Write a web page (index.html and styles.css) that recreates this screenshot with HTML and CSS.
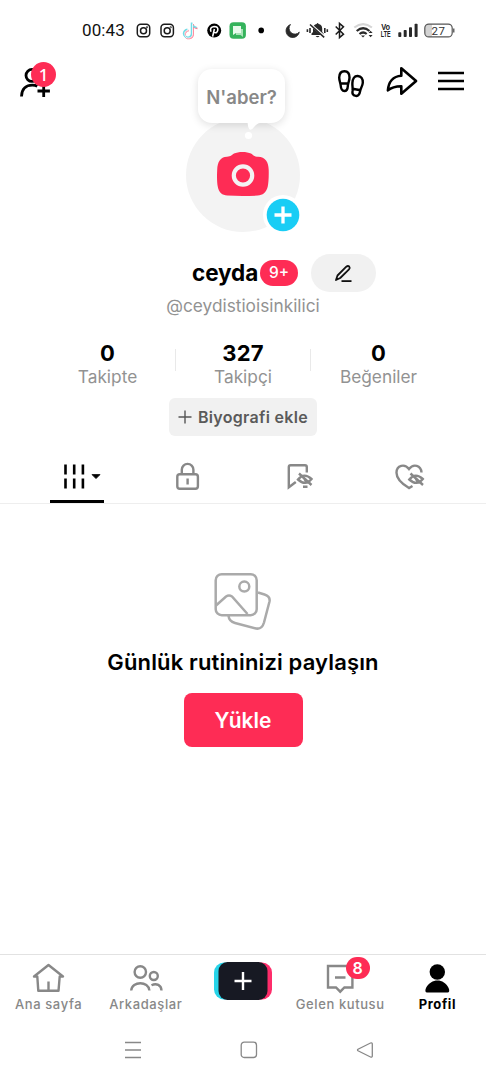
FILE: index.html
```html
<!DOCTYPE html>
<html lang="tr">
<head>
<meta charset="utf-8">
<title>Profil</title>
<link rel="stylesheet" href="styles.css">
</head>
<body>
<div class="phone">
  <div class="status">
    <span class="clock">00:43</span>
    <svg class="ink" width="24" height="24" viewBox="132 18 24 24"><rect x="137.3" y="24.3" width="12.4" height="12.4" rx="3.4"/><circle cx="143.5" cy="30.7" r="3"/><circle cx="147" cy="27.3" r=".3"/></svg>
    <svg class="ink" width="23" height="24" viewBox="156 18 23 24"><rect x="161" y="24.3" width="12.4" height="12.4" rx="3.4"/><circle cx="167.2" cy="30.7" r="3"/><circle cx="170.7" cy="27.3" r=".3"/></svg>
    <svg width="24" height="24" viewBox="179 18 24 24" fill="none" stroke-width="1.7"><path stroke="#ff7b91" d="M193 24v10a4 4 0 1 1-4-3.5M193 25q1 3 4.5 3.5"/><path stroke="#72dce6" d="M191.6 22.5v10.5a4 4 0 1 1-4.2-3.6M191.6 24q1 3 5 3.5"/><path stroke="#fff" stroke-width=".8" d="M192.5 24v10a3.8 3.8 0 1 1-4-3.5"/></svg>
    <svg width="23" height="24" viewBox="203 18 23 24"><circle cx="214.2" cy="30.6" r="7"/><path d="M211 31.7q-1.8-4.7 3.1-5.2 4.2 0 3.7 3.6-.8 3.7-3.8 2.3M214.4 29l-1.8 7.6" fill="none" stroke="#fff" stroke-width="1.6"/></svg>
    <svg width="24" height="24" viewBox="226 18 24 24"><rect x="229.5" y="22.3" width="16.4" height="16.4" rx="4" fill="#35b35c"/><path d="M236 29h7v8l-2.5-2H236z" fill="#a9e4b8"/><path d="M233 26h8v7h-5l-3 2z" fill="#e8faec"/></svg>
    <svg width="30" height="24" viewBox="250 18 30 24"><circle cx="261.2" cy="30.4" r="2.8"/></svg>
    <svg class="dark" width="24" height="24" viewBox="280 18 24 24"><path d="M290.500 24.500a5.500 5.500 0 0 0 8.800 7.600A6.700 6.700 0 1 1 290.500 24.500z" stroke="#292929" stroke-width=".8"/></svg>
    <svg class="dark" width="28" height="24" viewBox="304 18 28 24"><path d="M311.500 35v-1.500l1.500-1.500v-3.500q.2-3.700 3.600-4.500 1-1.800 2 0 3.500.8 3.600 4.500V32l1.400 1.500V35zM315.600 36h3.900q-1.800 2.700-3.900 0z"/><path d="M310.500 24.300l14.400 12.500" stroke="#fff" stroke-width="2.400"/><path d="M310 24.500l14.200 12.900M307.400 29.300v2.600M310 28v5M324.800 28v5M327.300 29.300v2.600" fill="none" stroke="#292929" stroke-width="1.600"/></svg>
    <svg class="ink" width="18" height="24" viewBox="332 18 18 24"><path d="M335.700 26.500l7.800 7.600-4 3.500V23.400l4 3.500-7.800 7.600"/></svg>
    <svg width="27" height="24" viewBox="350 18 27 24" fill="none" stroke="#292929" stroke-width="2.200"><path d="M354.300 27.500q8.800-6.800 17.600 0" stroke="#d5d5d5"/><path d="M356.700 31q6.400-5.500 12.800 0M359.500 34q3.600-3 7.200 0"/><path d="M361 35.500h4l-2 2zM368.600 33l2-2.200 2 2.200zM368.600 35l2 2.200 2-2.200z" fill="#292929" stroke="none"/></svg>
    <svg width="19" height="24" viewBox="377 18 19 24" class="volte"><text x="381.200" y="29.600" textLength="9" lengthAdjust="spacingAndGlyphs">Vo</text><text x="380.800" y="37" textLength="9.800" lengthAdjust="spacingAndGlyphs">LTE</text></svg>
    <svg class="dark" width="25" height="24" viewBox="396 18 25 24"><rect x="398.300" y="32.300" width="3" height="4.700" rx=".8"/><rect x="403.700" y="30" width="3" height="7" rx=".8"/><rect x="409" y="27.300" width="3" height="9.700" rx=".8"/><rect x="414.600" y="23.800" width="3" height="13.200" rx=".8"/></svg>
    <svg width="37" height="24" viewBox="421 18 37 24"><path d="M429 24.300h3v12.400h-3a4 4 0 0 1-4-4v-4.400a4 4 0 0 1 4-4z" fill="#d3d3d3"/><rect x="424.800" y="24.100" width="27.400" height="12.800" rx="4" fill="none" stroke="#555" stroke-width="1.200"/><path d="M453.700 28.500v4" stroke="#666" stroke-width="1.600"/><text x="438.500" y="34.700" text-anchor="middle" class="battery">27</text></svg>
  </div>

  <header class="top">
    <div class="friend">
      <svg width="34" height="36" viewBox="18 63 34 36" fill="none" stroke="#000" stroke-width="2.800"><circle cx="32" cy="75.400" r="6"/><path d="M21.500 96.500c.2-8 5-11.300 10.800-11.300q3 0 5 1.100M37.500 91h12.400M43.700 85v12"/></svg>
      <span class="count">1</span>
    </div>
    <div class="portrait">
      <div class="avatar">
        <svg width="52" height="46" viewBox="217 151 52 46"><path d="M227 156.800c4-.3 5-2 7-3.300 4-2.100 13-2.100 17 0 2 1.300 3 3 7 3.300 7.500.5 10.500 5 10.700 13 .2 7-.2 13.500-1 17-1.500 6-5 8.400-10 8.800q-15.200.9-30.400 0c-5-.4-8.500-2.800-9.500-8.800-.8-4-1-10-.6-17 .3-8 3-12.500 9.800-13z" fill="#fe2c55"/><circle cx="243" cy="175.500" r="9.200" fill="#fe2c55" stroke="#f3f3f3" stroke-width="4.200"/></svg>
      </div>
      <div class="bubble">N'aber?</div>
      <svg class="tail" width="18" height="24" viewBox="242 119 18 24"><path d="M246 120h14v3q-2.500 0-5.500 3.500-3.500 4.800-5.300 2.600-1.200-1.600-1.600-6.100z" fill="#fff"/><circle cx="248.500" cy="135.500" r="3.600" fill="#fff"/></svg>
      <svg class="add" width="40" height="40" viewBox="0 0 40 40"><circle cx="20" cy="20" r="20" fill="#fff"/><circle cx="20" cy="20" r="16.300" fill="#19cdf5"/><path d="M11.500 20h17M20 11.500v17" stroke="#fff" stroke-width="3.300"/></svg>
    </div>
    <div class="actions">
      <svg width="28" height="34" viewBox="337 65 28 34" fill="none" stroke="#000" stroke-width="2.400"><path d="M344.500 71.200c3.200 0 5 2.600 5 6.300 0 3.200-1.200 4.500-1.600 7.500-.2 3 0 6-3.500 6-3.100 0-3.500-2.500-3.700-5.500-.2-2.500-1.500-5-1.500-8 .1-4 2-6.300 5.300-6.300zM340.300 83.500h7.800"/><path d="M357.800 76c3.400.2 5.200 3 5 6.700-.2 2.800-2 5.200-2.600 8.200-.5 3-1.200 5.400-4.400 5-3.500-.4-3.600-3-3.200-5.500.3-2.700-.4-4-.2-7.500.2-4 1.800-7.100 5.400-6.900zM352.500 88.700l8.200 1.500"/></svg>
      <svg width="34" height="34" viewBox="384 65 34 34" fill="none" stroke="#000" stroke-width="2.600" stroke-linejoin="round"><path d="M401.300 68.200l14.800 12.700-14.800 12.800v-7.500c-6 0-9.800 1-13.400 4.200.6-8.400 5.200-14.200 13.400-14.700z"/></svg>
      <svg width="28" height="34" viewBox="437 65 28 34"><path d="M438 73h26M438 81h26M438 89h26" stroke="#000" stroke-width="2.300"/></svg>
    </div>
  </header>

  <section class="identity">
    <h1 class="name">ceyda</h1><span class="unread">9+</span>
    <button class="edit"><svg width="20" height="20" viewBox="334 262 20 20" fill="none" stroke="#111" stroke-width="1.800" stroke-linejoin="round"><path d="M336 279l1.500-4.500 8.800-8.800q1.600-1.400 2.900-.2 1.200 1.400-.2 2.900L340.200 277z"/><path d="M341.500 280.100h10"/></svg></button>
  </section>
  <p class="handle">@ceydistioisinkilici</p>

  <section class="stats">
    <div class="stat"><b>0</b><span>Takipte</span></div>
    <div class="stat middle"><b>327</b><span>Takipçi</span></div>
    <div class="stat"><b>0</b><span>Beğeniler</span></div>
  </section>
  <button class="bio"><svg width="14" height="14" viewBox="0 0 14 14"><path d="M.5 7h13M7 .5v13" stroke="#555" stroke-width="1.400"/></svg><span>Biyografi ekle</span></button>

  <nav class="tabs">
    <div class="tab active"><svg width="42" height="30" viewBox="61 462 42 30"><path d="M65.500 464.500v10m8.700-10v10m8.700-10v10M65.500 478.500v10m8.700-10v10m8.700-10v10" stroke="#000" stroke-width="2.600"/><path d="M92 474.600h8l-4 4z" stroke="#000" stroke-width=".8" stroke-linejoin="round"/></svg></div>
    <div class="tab"><svg class="grey" width="30" height="30" viewBox="173 462 30 30"><rect x="177.300" y="474.200" width="20.600" height="14.500" rx="2.500"/><path d="M181.800 474v-4.300a5.800 5.800 0 0 1 11.600 0v4.300M187.600 478.500v6"/></svg></div>
    <div class="tab"><svg class="grey" width="32" height="30" viewBox="283.500 462 32 30"><path d="M307.300 472.500v-5.500q0-1.800-1.800-1.800h-14.400q-1.800 0-1.800 1.800v20.300l7-5.300M303.500 486.700h4.500"/><path d="M298.500 479.500q6-7.500 13.500-.5-6 7.500-13.500.5zM299.500 473.500l12.500 11.500M303.500 476.500l3.500 6"/></svg></div>
    <div class="tab"><svg class="grey" width="32" height="30" viewBox="394 462 32 30"><path d="M421.500 472.500c-.5-7-8-9.300-12.500-3.500-4.200-5.500-12.500-4-12.500 3.800 0 6.200 5.300 11 12.500 15.200l3.500-2"/><path d="M409.300 479.500q6-7.500 13.500-.5-6 7.500-13.500.5zM410.500 473.500l12.500 11.500M414.500 476.500l3.500 6"/></svg></div>
  </nav>

  <main class="empty">
    <svg width="60" height="60" viewBox="213 572 60 60" fill="none" stroke="#aaa" stroke-width="2.500"><rect x="215.700" y="574.200" width="41" height="41" rx="6"/><circle cx="244.300" cy="586.600" r="5"/><path d="M216 605.500l10-9q3-1.800 6 0l15.500 17.500M258 592.500l6.500 2q6 2 5 7l-5.500 21q-2 7-8 6l-21-5.500q-6-1.500-6.500-7.300"/></svg>
    <h2>Günlük rutininizi paylaşın</h2>
    <button class="upload">Yükle</button>
  </main>

  <nav class="bottom">
    <div class="item"><svg class="grey" width="34" height="32" viewBox="32 963 34 32" stroke-linejoin="round"><path d="M34 976.500l14.500-11.500 14.500 11.500h-3.300l-1.200 14.300H38.300l-1-14.300zM48.500 981.500v9"/></svg><span>Ana sayfa</span></div>
    <div class="item"><svg class="grey" width="36" height="32" viewBox="128 963 36 32"><circle cx="140.300" cy="972" r="5.700"/><circle cx="153.800" cy="976" r="4"/><path d="M131.200 990.500c.8-9.600 17.400-9.600 18.200 0M151.500 985.200c5-2.500 9.800 0 10 5.300"/></svg><span>Arkadaşlar</span></div>
    <div class="item create"><svg width="58" height="38" viewBox="0 0 58 38"><rect width="42" height="37" rx="10" y=".5" fill="#27d4e9"/><rect x="16" y=".5" width="42" height="37" rx="10" fill="#fe2c6a"/><rect x="4.500" width="49" height="38" rx="9" fill="#171923"/><path d="M20.500 19h17M29 10v18" stroke="#fff" stroke-width="2.400"/></svg></div>
    <div class="item"><svg class="grey" width="34" height="32" viewBox="323 963 34 32"><path d="M328 966h24.400v21.500h-8l-4.200 4.200-4.200-4.200h-8zM335 977.500h10.500"/></svg><span class="badge">8</span><span>Gelen kutusu</span></div>
    <div class="item selected"><svg width="34" height="32" viewBox="420 963 34 32"><circle cx="437.300" cy="972" r="7.700"/><path d="M425.500 991.500q-.5-1.500.5-3.500c5-10 18-10 22.600 0q1 2 .5 3.500-.3 1-1.500 1h-20.600q-1.200 0-1.500-1z"/></svg><span>Profil</span></div>
  </nav>
  <footer class="system">
    <svg width="18" height="20" viewBox="0 0 18 20"><path d="M1 2.500h16M1 10h16M1 17.500h16" stroke="#888" stroke-width="1.300"/></svg>
    <svg width="18" height="18" viewBox="0 0 18 18"><rect x="1.200" y="1.200" width="15.300" height="15.300" rx="3" fill="none" stroke="#888" stroke-width="1.300"/></svg>
    <svg width="18" height="18" viewBox="0 0 18 18"><path d="M2 8.200Q1 9 2 9.800L14.500 16q1.800.6 1.800-1V3q0-1.600-1.800-1z" fill="none" stroke="#888" stroke-width="1.300"/></svg>
  </footer>
</div>
</body>
</html>
```
FILE: styles.css
```css
* { box-sizing: border-box; }
body { margin: 0; background: #fff; color: #000; font-family: Inter, "Noto Sans", sans-serif; }
svg { display: block; flex: none; }
button { border: 0; padding: 0; font: inherit; }
h1, h2, p { margin: 0; }
.phone { width: 486px; height: 1080px; display: flex; flex-direction: column; overflow: hidden; }

.status { height: 60px; padding: 0 0 0 82px; display: flex; align-items: center; }
.clock { width: 50px; flex: none; font: 400 17px Roboto, sans-serif; letter-spacing: .1px; white-space: nowrap; color: #111; }
.ink { fill: none; stroke: #1b1b1b; stroke-width: 1.5; }
.dark { fill: #292929; }
.volte { font: 700 8.500px "Liberation Sans", sans-serif; fill: #222; }
.battery { font: 400 11.500px Roboto, sans-serif; letter-spacing: .5px; fill: #333; }

.top { height: 188px; display: flex; justify-content: space-between; align-items: flex-start; }
.friend { position: relative; width: 186px; padding: 3px 0 0 18px; }
.count { position: absolute; left: 31px; top: 2px; width: 25px; height: 25px; border-radius: 50%; background: #fe2c55; color: #fff; font: 500 17px/25px "Noto Sans", sans-serif; text-align: center; }
.portrait { position: relative; width: 114px; padding-top: 58px; }
.avatar { width: 114px; height: 114px; border-radius: 50%; background: #f3f3f3; display: flex; align-items: center; justify-content: center; }
.avatar svg { transform: translateY(-1px); }
.bubble { position: absolute; left: 12px; top: 9px; width: 87px; height: 54px; border-radius: 14px; background: #fff; box-shadow: 0 2px 9px rgba(0, 0, 0, .13); color: #888; font-size: 18.500px; font-weight: 600; line-height: 56px; text-align: center; white-space: nowrap; }
.tail { position: absolute; left: 56px; top: 59px; }
.add { position: absolute; left: 77px; top: 135px; }
.actions { width: 186px; padding: 5px 21px 0 37px; display: flex; justify-content: space-between; }

.identity { height: 49px; padding: 0 110px 0 192px; display: flex; align-items: center; }
.name { width: 68px; flex: none; font-size: 22.500px; line-height: 28px; font-weight: 700; letter-spacing: -.1px; }
.unread { width: 38px; height: 26px; border-radius: 13px; background: #fe2c55; color: #fff; font-size: 15.500px; line-height: 26px; font-weight: 500; text-align: center; }
.edit { width: 65px; height: 38px; margin-left: 13px; border-radius: 19px; background: #f1f1f1; display: flex; align-items: center; justify-content: center; }
.handle { height: 36px; font-size: 17.300px; line-height: 17px; color: #929292; text-align: center; }

.stats { height: 65px; padding: 8px 40px 0; display: grid; grid-template-columns: 135px 136px 135px; }
.stat { height: 48px; display: flex; flex-direction: column; align-items: center; }
.stat b { font-size: 22px; line-height: 25px; font-weight: 700; letter-spacing: .2px; }
.stat span { font-size: 17.300px; line-height: 21px; color: #929292; }
.middle { background: linear-gradient(#e9e9e9, #e9e9e9) left 8px / 1px 22px no-repeat, linear-gradient(#e9e9e9, #e9e9e9) right 8px / 1px 22px no-repeat; }
.bio { width: 148px; height: 38px; margin: 0 auto; border-radius: 6px; background: #f1f1f1; color: #5a5a5a; display: flex; align-items: center; justify-content: center; gap: 6px; font-size: 16px; font-weight: 600; letter-spacing: .3px; white-space: nowrap; }

.tabs { height: 68px; padding: 0 21px; border-bottom: 1px solid #eee; display: grid; grid-template-columns: repeat(4, 111px); }
.tab { padding-top: 26px; display: flex; justify-content: center; }
.tab.active { justify-content: flex-start; padding-left: 40px; background: linear-gradient(#000, #000) 29px 100% / 54px 3px no-repeat; }
.grey { fill: none; stroke: #888; stroke-width: 2.400; }

.empty { flex: 1; padding-top: 68px; display: flex; flex-direction: column; align-items: center; }
.empty h2 { margin-top: 16px; font-size: 22px; line-height: 28px; font-weight: 600; letter-spacing: .15px; white-space: nowrap; }
.upload { width: 119px; height: 54px; margin-top: 17px; border-radius: 8px; background: #fe2c55; color: #fff; font-size: 21px; font-weight: 600; }

.bottom { height: 66px; padding-top: 8px; border-top: 1px solid #e2e2e2; display: grid; grid-template-columns: repeat(5, 1fr); }
.item { position: relative; display: flex; flex-direction: column; align-items: center; color: #888; font-size: 13px; font-weight: 500; line-height: 19px; letter-spacing: .6px; white-space: nowrap; }
.create svg { margin-top: -1px; }
.selected { color: #000; font-weight: 700; }
.badge { position: absolute; left: 54px; top: -6px; width: 24px; height: 22px; border-radius: 11px; background: #fe2c55; color: #fff; font-size: 16px; font-weight: 600; line-height: 22px; letter-spacing: 0; text-align: center; }
.system { height: 60px; padding: 0 112px 0 124px; display: flex; align-items: center; justify-content: space-between; }
```
